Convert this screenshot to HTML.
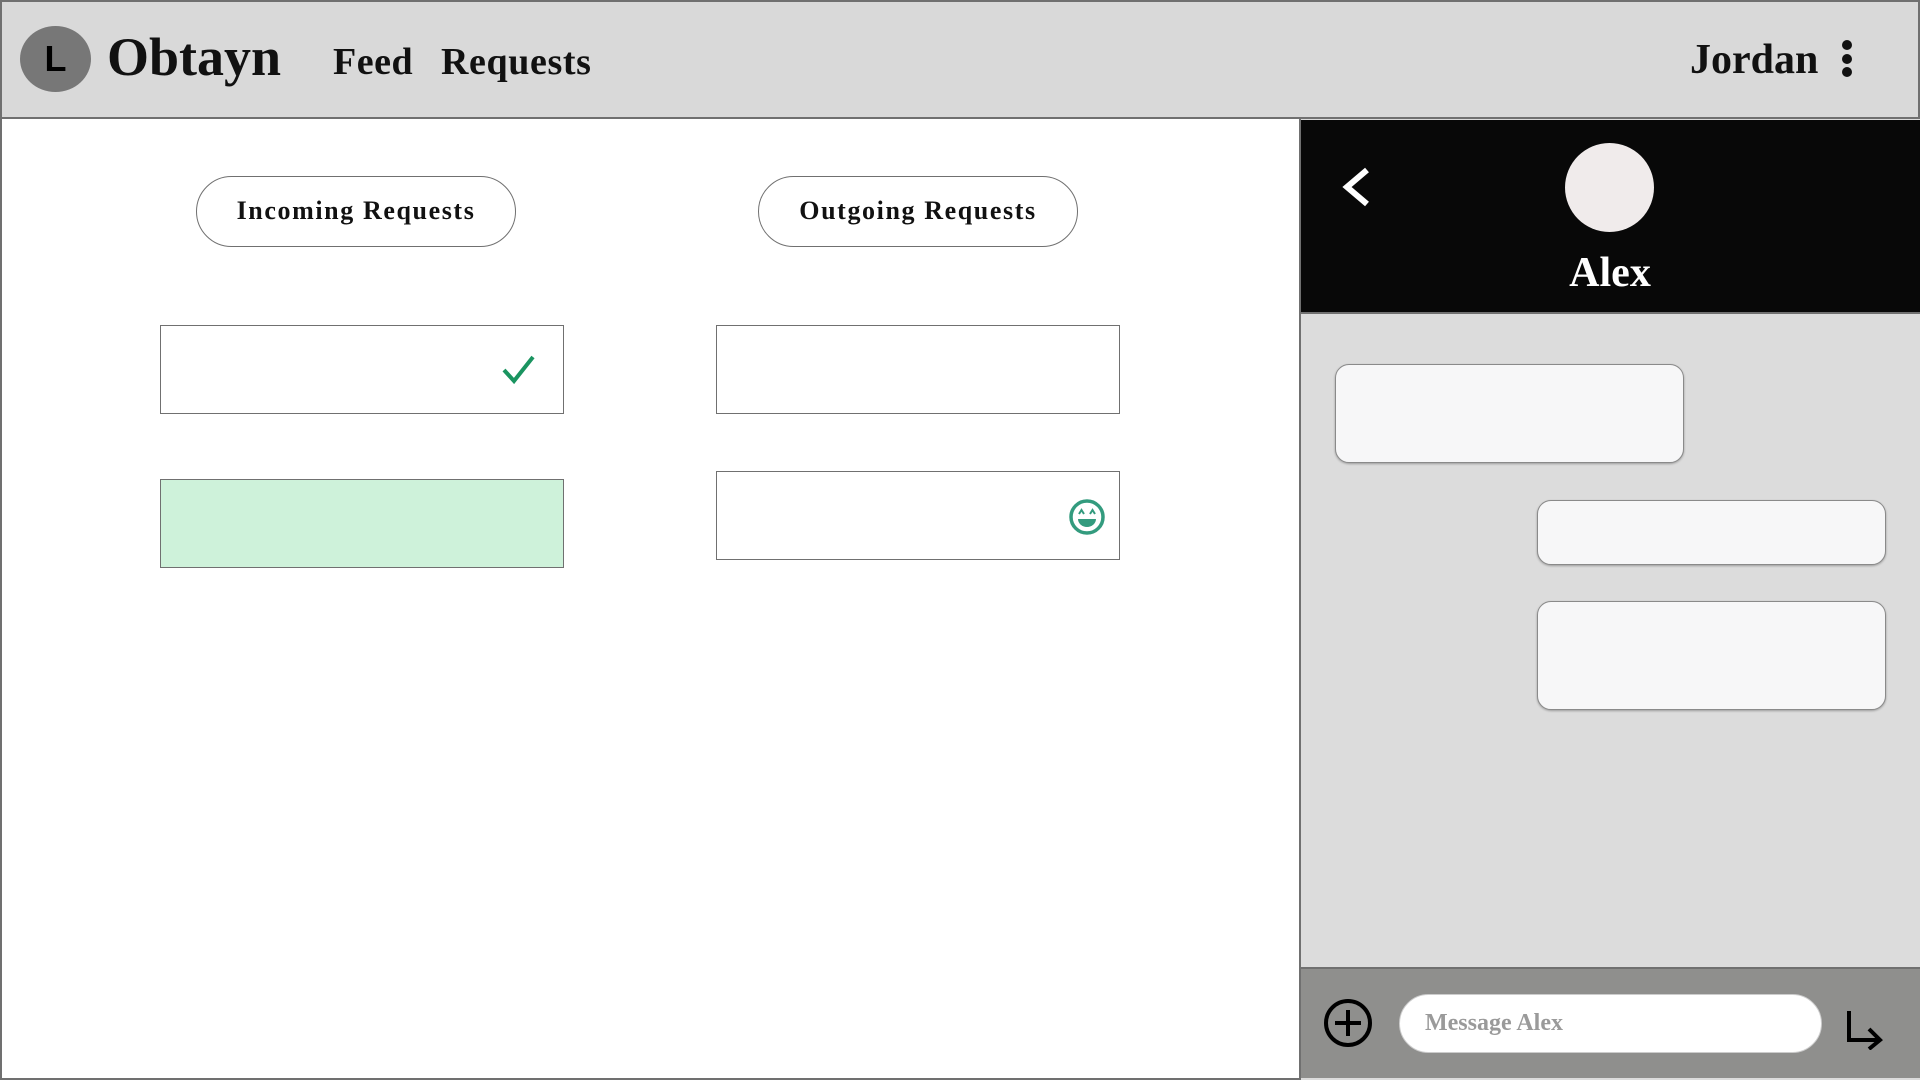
<!DOCTYPE html>
<html><head><meta charset="utf-8"><style>
*{box-sizing:border-box;margin:0;padding:0}
body{width:1920px;height:1080px;position:relative;overflow:hidden;background:#fff;font-family:"Liberation Serif","DejaVu Serif",serif;color:#111}
.a{position:absolute}
.hdr{left:0;top:0;width:1920px;height:119px;background:#d9d9d9;border:2px solid #707070;border-bottom:2px solid #707070}
.logo{left:20px;top:26px;width:71px;height:66px;border-radius:50%;background:#777;font-family:"Liberation Sans",sans-serif;font-weight:bold;font-size:36px;color:#000;text-align:center;line-height:66px}
.t{white-space:nowrap}
.pill{border:1.5px solid #707070;border-radius:36px;background:#fff;text-align:center;font-weight:bold;font-size:26px;letter-spacing:1.6px;line-height:68px}
.box{border:1.5px solid #707070;background:#fff}
.bub{background:#f7f7f8;border:1.5px solid #8a8a8a;border-radius:14px;box-shadow:0 1px 2px rgba(0,0,0,.3)}
</style></head><body>
<div class="a hdr"></div>
<div class="a logo">L</div>
<div class="a t" style="left:107px;top:25px;font-size:54px;font-weight:bold;line-height:64px">Obtayn</div>
<div class="a t" style="left:333px;top:38px;font-size:38px;font-weight:bold;line-height:48px;letter-spacing:0.5px">Feed</div>
<div class="a t" style="left:441px;top:38px;font-size:38px;font-weight:bold;line-height:48px;letter-spacing:0.6px">Requests</div>
<div class="a t" style="left:1690px;top:34px;font-size:42px;font-weight:bold;line-height:52px">Jordan</div>
<div class="a" style="left:1842px;top:40px;width:10px;height:10px;border-radius:50%;background:#111"></div>
<div class="a" style="left:1842px;top:54px;width:10px;height:10px;border-radius:50%;background:#111"></div>
<div class="a" style="left:1842px;top:67px;width:10px;height:10px;border-radius:50%;background:#111"></div>
<div class="a" style="left:0;top:119px;width:2px;height:961px;background:#707070"></div>
<div class="a" style="left:0;top:1078px;width:1920px;height:2px;background:#707070"></div>

<div class="a pill" style="left:196px;top:176px;width:320px;height:71px">Incoming Requests</div>
<div class="a pill" style="left:758px;top:176px;width:320px;height:71px">Outgoing Requests</div>

<div class="a box" style="left:160px;top:325px;width:404px;height:89px"></div>
<svg class="a" style="left:500px;top:352px" width="38" height="34" viewBox="0 0 38 34"><path d="M4 18 L14 29 L33 5" fill="none" stroke="#1a9460" stroke-width="4"/></svg>
<div class="a box" style="left:160px;top:479px;width:404px;height:89px;background:#cef2da"></div>
<div class="a box" style="left:716px;top:325px;width:404px;height:89px"></div>
<div class="a box" style="left:716px;top:471px;width:404px;height:89px"></div>
<svg class="a" style="left:1068px;top:498px" width="38" height="38" viewBox="0 0 38 38"><circle cx="19" cy="19" r="16" fill="none" stroke="#339b7e" stroke-width="3.5"/><path d="M10 21 H28 A9 8 0 0 1 10 21Z" fill="#339b7e"/><path d="M11 16 L13.5 12 L16 16 M22 16 L24.5 12 L27 16" fill="none" stroke="#339b7e" stroke-width="2"/></svg>

<div class="a" style="left:1299px;top:119px;width:621px;height:961px;background:#dcdcdc;border-left:2px solid #707070"></div>
<div class="a" style="left:1301px;top:120px;width:619px;height:193px;background:#080808"></div>
<div class="a" style="left:1301px;top:312px;width:619px;height:2px;background:#707070"></div>
<svg class="a" style="left:1334px;top:166px" width="40" height="42" viewBox="0 0 40 42"><path d="M33 4 L13 21 L33 38" fill="none" stroke="#fff" stroke-width="6"/></svg>
<div class="a" style="left:1565px;top:143px;width:89px;height:89px;border-radius:50%;background:#f0ebeb"></div>
<div class="a t" style="left:1510px;top:248px;width:200px;text-align:center;font-size:42px;font-weight:bold;color:#fff;line-height:50px">Alex</div>

<div class="a bub" style="left:1335px;top:364px;width:349px;height:99px"></div>
<div class="a bub" style="left:1537px;top:500px;width:349px;height:65px"></div>
<div class="a bub" style="left:1537px;top:601px;width:349px;height:109px"></div>

<div class="a" style="left:1301px;top:967px;width:619px;height:111px;background:#8f8f8d;border-top:2px solid #707070"></div>
<svg class="a" style="left:1322px;top:997px" width="52" height="52" viewBox="0 0 52 52"><circle cx="26" cy="26" r="22" fill="none" stroke="#000" stroke-width="4"/><path d="M26 13 V39 M13 26 H39" stroke="#000" stroke-width="4"/></svg>
<div class="a" style="left:1399px;top:994px;width:423px;height:59px;background:#fff;border-radius:30px;border:1px solid #ccc"></div>
<div class="a t" style="left:1425px;top:1008px;font-size:24px;font-weight:bold;color:#9a9a9a;line-height:30px">Message Alex</div>
<svg class="a" style="left:1845px;top:1008px" width="42" height="42" viewBox="0 0 42 42"><path d="M4 3 V32 H34 M24 21 L35 32 L24 41" fill="none" stroke="#000" stroke-width="4"/></svg>
</body></html>
